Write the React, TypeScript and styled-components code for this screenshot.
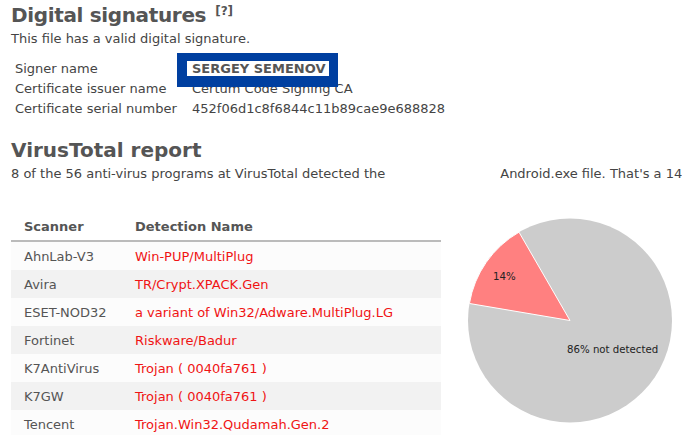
import React from "react";
import styled, { createGlobalStyle } from "styled-components";

const Global = createGlobalStyle`
  html, body { margin: 0; padding: 0; background: #fff; }
  body { font-family: "DejaVu Sans", Verdana, sans-serif; color: #555; overflow: hidden; }
`;

const Page = styled.div`
  width: 682px;
  height: 435px;
  overflow: hidden;
  padding: 0 0 0 11px;
  box-sizing: border-box;
`;

const Heading = styled.h2<{ $top: number; $tight?: boolean }>`
  margin: ${(p) => p.$top}px 0 0 0;
  font-size: 20px;
  line-height: 24px;
  font-weight: bold;
  color: #555;
  white-space: nowrap;
  letter-spacing: ${(p) => (p.$tight ? "-0.35px" : "0")};
`;

const Help = styled.sup`
  font-size: 12px;
  font-weight: bold;
  margin-left: 9px;
  vertical-align: 7px;
  line-height: 0;
  letter-spacing: 0;
`;

const Para = styled.p`
  margin: 4px 0 0 0;
  font-size: 13px;
  line-height: 16px;
  color: #444;
  white-space: nowrap;
`;

const SigTable = styled.div`
  margin: 14px 0 0 4px;
  display: grid;
  grid-template-columns: 177px auto;
  row-gap: 4px;
  font-size: 13px;
  line-height: 16px;
  color: #444;
`;

const SigCell = styled.div`
  position: relative;
  white-space: nowrap;
`;

const Frame = styled.div`
  position: absolute;
  left: -15px;
  top: -8px;
  width: 161px;
  height: 34px;
  background: #003fa0;
  z-index: 1;
`;

const Marked = styled.span`
  position: relative;
  z-index: 2;
  background: #fff;
  font-weight: bold;
  color: #555;
  margin-left: -5px;
  padding: 0 4px 0 5px;
  line-height: 15px;
`;

const Gap = styled.span`
  display: inline-block;
  width: 115px;
`;

const Report = styled.div`
  display: flex;
  margin-top: 31px;
`;

const Table = styled.div`
  width: 430px;
  flex: none;
`;

const HeadRow = styled.div`
  display: grid;
  grid-template-columns: 111px auto;
  height: 27px;
  padding-left: 13px;
  align-items: center;
  border-bottom: 2px solid #bbb;
  font-size: 13px;
  font-weight: bold;
  color: #555;
`;

const Row = styled.div<{ $alt: boolean }>`
  display: grid;
  grid-template-columns: 111px auto;
  height: 28px;
  padding-left: 13px;
  align-items: center;
  background: ${(p) => (p.$alt ? "#f2f2f2" : "#fcfcfc")};
  font-size: 13px;
  white-space: nowrap;
`;

const Scanner = styled.span`
  color: #555;
`;

const Detection = styled.span`
  color: #f01414;
`;

const Chart = styled.svg`
  flex: none;
  display: block;
`;

const rows: [string, string][] = [
  ["AhnLab-V3", "Win-PUP/MultiPlug"],
  ["Avira", "TR/Crypt.XPACK.Gen"],
  ["ESET-NOD32", "a variant of Win32/Adware.MultiPlug.LG"],
  ["Fortinet", "Riskware/Badur"],
  ["K7AntiVirus", "Trojan ( 0040fa761 )"],
  ["K7GW", "Trojan ( 0040fa761 )"],
  ["Tencent", "Trojan.Win32.Qudamah.Gen.2"],
];

function Pie() {
  const cx = 129;
  const cy = 107.5;
  const r = 102;
  const pt = (deg: number) => {
    const a = (deg * Math.PI) / 180;
    return [cx + r * Math.sin(a), cy - r * Math.cos(a)];
  };
  const [x1, y1] = pt(-80.4);
  const [x2, y2] = pt(-30);
  return (
    <Chart width={241} height={230} viewBox="0 0 241 230">
      <circle cx={cx} cy={cy} r={r} fill="#cccccc" />
      <path
        d={`M${cx},${cy} L${x1},${y1} A${r},${r} 0 0,1 ${x2},${y2} Z`}
        fill="#ff8080"
        stroke="#fff"
        strokeWidth={1}
      />
      <text x={52} y={67} fontSize={10.2} fontFamily="DejaVu Sans, Verdana, sans-serif" fill="#222">
        14%
      </text>
      <text x={126} y={140} fontSize={10.2} fontFamily="DejaVu Sans, Verdana, sans-serif" fill="#222">
        86% not detected
      </text>
    </Chart>
  );
}

export default function App() {
  return (
    <>
      <Global />
      <Page>
        <Heading $top={3} $tight>
          Digital signatures<Help>[?]</Help>
        </Heading>
        <Para>This file has a valid digital signature.</Para>
        <SigTable>
          <SigCell>Signer name</SigCell>
          <SigCell>
            <Frame />
            <Marked>SERGEY SEMENOV</Marked>
          </SigCell>
          <SigCell>Certificate issuer name</SigCell>
          <SigCell>Certum Code Signing CA</SigCell>
          <SigCell>Certificate serial number</SigCell>
          <SigCell>452f06d1c8f6844c11b89cae9e688828</SigCell>
        </SigTable>
        <Heading $top={21}>VirusTotal report</Heading>
        <Para>
          8 of the 56 anti-virus programs at VirusTotal detected the<Gap />Android.exe file. That's a 14% detection rate.
        </Para>
        <Report>
          <Table>
            <HeadRow>
              <span>Scanner</span>
              <span>Detection Name</span>
            </HeadRow>
            {rows.map(([s, d], i) => (
              <Row key={s} $alt={i % 2 === 1}>
                <Scanner>{s}</Scanner>
                <Detection>{d}</Detection>
              </Row>
            ))}
          </Table>
          <Pie />
        </Report>
      </Page>
    </>
  );
}
